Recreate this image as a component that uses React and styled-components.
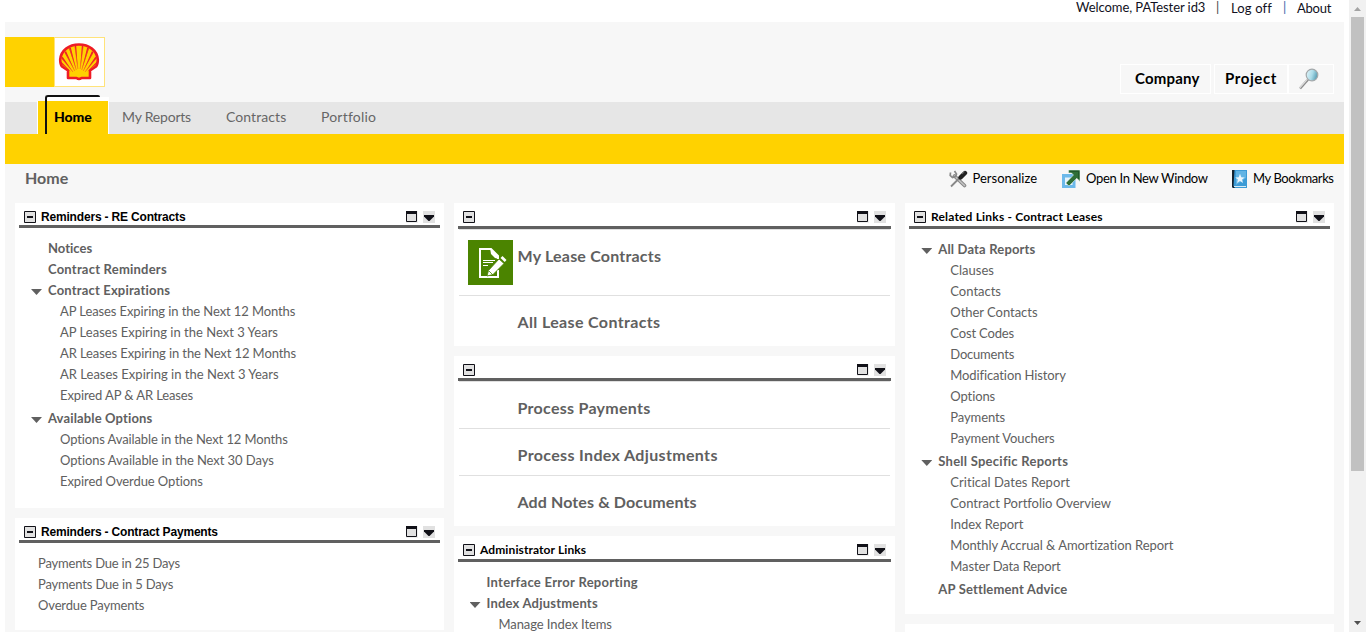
import React from "react";
import styled, { createGlobalStyle } from "styled-components";

const GlobalStyle = createGlobalStyle`
  * { box-sizing: border-box; }
  body {
    margin: 0;
    overflow: hidden;
    background: #fff;
    color: #000;
    font: 13px/21px "Trebuchet MS", Lato, "Open Sans", sans-serif;
    font-variant-ligatures: none;
  }
`;

const Window = styled.div`
  display: flex;
  height: 632px;
  overflow: hidden;
`;
const Page = styled.div`
  width: 1349px;
  padding: 0 5px;
`;

/* top line */
const UserBar = styled.div`
  display: flex;
  justify-content: flex-end;
  height: 22px;
  padding-right: 12px;
  line-height: 15px;
  white-space: nowrap;
`;
const UserItem = styled.span`
  width: ${(p) => p.$w}px;
  color: ${(p) => p.$color || "#111122"};
  letter-spacing: ${(p) => p.$ls || 0}px;
  padding-top: ${(p) => p.$top || 0}px;
`;

/* masthead */
const Masthead = styled.header`
  display: flex;
  justify-content: space-between;
  height: 80px;
  background: #f7f7f7;
`;
const Brand = styled.div`
  display: flex;
  width: 100px;
  height: 50px;
  margin-top: 15px;
  background: #ffd200;
`;
const BrandMark = styled.div`
  width: 51px;
  height: 50px;
  margin-left: 49px;
  border: 1px solid #ffe37a;
  background: #fff;
`;
const Scopes = styled.div`
  display: flex;
  height: 30px;
  margin: 42px 10px 0 0;
`;
const Scope = styled.div`
  width: ${(p) => p.$w}px;
  height: 30px;
  margin-right: ${(p) => p.$gap || 0}px;
  padding-left: ${(p) => p.$pad || 0}px;
  border: 1px solid #fff;
  font-size: 15px;
  font-weight: 700;
  line-height: 26px;
  letter-spacing: ${(p) => p.$ls || 0}px;
  svg { margin-top: 2px; }
`;

/* navigation */
const Nav = styled.nav`
  display: flex;
  height: 32px;
  padding-left: 32px;
  background: #e6e6e6;
`;
const ActiveTab = styled.div`
  position: relative;
  width: 72px;
  height: 33px;
  margin: -1px 13px 0 0;
  padding-left: 16px;
  border: solid #fff;
  border-width: 0 1px;
  background: #ffd200;
  font-size: 14px;
  font-weight: 900;
  line-height: 31px;
  letter-spacing: -0.1px;
`;
const TabTop = styled.i`
  position: absolute;
  left: 8px;
  top: -4px;
  width: 63px;
  height: 4px;
  background: #fff;
`;
const TabOutline = styled.i`
  position: absolute;
  left: 7px;
  top: -6px;
  width: 55px;
  height: 39px;
  border: solid #111;
  border-width: 2px 0 0 2px;
  border-radius: 3px 2px 0 0;
`;
const Tab = styled.div`
  width: ${(p) => p.$w}px;
  color: #666;
  font-size: 14px;
  line-height: 30px;
  letter-spacing: ${(p) => p.$ls || 0}px;
  white-space: nowrap;
`;
const SubNav = styled.div`
  height: 30px;
  background: #ffd200;
`;

/* page body */
const Body = styled.main`
  height: 468px;
  padding: 0 10px;
  background: #f7f7f7;
`;
const TitleRow = styled.div`
  display: flex;
  justify-content: space-between;
  height: 39px;
  padding-left: 10px;
`;
const Title = styled.h1`
  margin: 0;
  color: #606060;
  font-size: 16px;
  line-height: 28px;
`;
const Actions = styled.div`
  display: flex;
  height: 30px;
`;
const Action = styled.div`
  display: flex;
  align-items: center;
  width: ${(p) => p.$w}px;
  line-height: 20px;
  letter-spacing: ${(p) => p.$ls || 0}px;
  white-space: nowrap;
  svg { margin-right: ${(p) => p.$gap}px; flex: none; }
`;
const ActionLabel = styled.span`
  padding-bottom: 2px;
`;
const Columns = styled.div`
  display: grid;
  grid-template-columns: 429px 441px 429px;
  column-gap: 10px;
`;
const Column = styled.div`
  display: flex;
  flex-direction: column;
  gap: 10px;
`;
const PanelBox = styled.section`
  height: ${(p) => p.$h}px;
  padding: 0 4px;
  background: #fff;
`;
const PanelHead = styled.div`
  display: flex;
  align-items: flex-start;
  height: ${(p) => p.$h}px;
  padding: 8px 5px 0;
  border-bottom: 3px solid #606060;
`;
const PanelTitle = styled.h2`
  flex: 1;
  margin: 0 0 0 5px;
  font-family: ${(p) => (p.$arial ? '"Liberation Sans", Arial, sans-serif' : "inherit")};
  font-size: 12px;
  font-weight: 700;
  line-height: 12px;
  letter-spacing: ${(p) => p.$ls || 0}px;
  white-space: nowrap;
`;
const HeadIcon = styled.svg`
  flex: none;
  width: 12px;
  height: 12px;
  margin-left: ${(p) => p.$ml || 0}px;
`;

/* link trees */
const Tree = styled.div`
  padding: ${(p) => p.$pad};
`;
const Entry = styled.div`
  display: flex;
  align-items: center;
  height: 21px;
  margin-top: ${(p) => p.$mt || 0}px;
  padding-left: ${(p) => p.$indent || 0}px;
  color: #606060;
  font-weight: ${(p) => (p.$bold ? 700 : 400)};
  letter-spacing: ${(p) => p.$ls || 0}px;
  white-space: nowrap;
`;
const Caret = styled.i`
  width: 11px;
  height: 6px;
  margin: 3px 6px 0 -1px;
  background: #606060;
  clip-path: polygon(0 0, 100% 0, 50% 100%);
`;

/* large shortcuts */
const Shortcuts = styled.div`
  margin: 0 1px;
  border-top: 1px solid #e0e0e0;
`;
const Shortcut = styled.div`
  display: flex;
  height: ${(p) => p.$h}px;
  padding: 16px 0 0 ${(p) => (p.$icon ? 9 : 58.5)}px;
  border-bottom: ${(p) => (p.$last ? 0 : 1)}px solid #e0e0e0;
  color: #606060;
  font-size: 16px;
  font-weight: 700;
  line-height: 20px;
  letter-spacing: ${(p) => p.$ls || 0}px;
  svg { flex: none; margin: -6px 4.500px 0 0; }
`;

/* scrollbar */
const Scrollbar = styled.div`
  display: flex;
  flex-direction: column;
  align-items: center;
  width: 17px;
  background: #f1f1f1;
`;
const ScrollArrow = styled.svg`
  width: 17px;
  height: 17px;
`;
const Thumb = styled.div`
  width: 13px;
  height: 454px;
  margin-bottom: 144px;
  background: #c1c1c1;
`;

const ShellLogo = () => (
  <svg width="48" height="48" viewBox="0 0 48 48">
    <path
      d="M13 40V32.500L7 28.500C5.500 27 5.200 24 5.200 21.500C6 12.500 14 6.500 24 6.500S42 12.500 42.800 21.500C42.800 24 42.500 27 41 28.500L35 32.500V40H26.500Q24 41.800 21.500 40Z"
      fill="#ffd200" stroke="#ee1c25" strokeWidth="2.600" strokeLinejoin="round"
    />
    <g fill="#ee1c25">
      <path d="M19.700 8L22.800 31L21.200 8ZM28.300 8L25.200 31L26.800 8Z" />
      <path d="M14 10.500L21.300 32L15.800 9.500ZM34 10.500L26.700 32L32.200 9.500Z" />
      <path d="M9.500 14.500L19.800 33L11 13ZM38.500 14.500L28.200 33L37 13Z" />
      <path d="M6.500 20.500L18 34L7.500 18.500ZM41.500 20.500L30 34L40.500 18.500Z" />
      <path d="M6 25.500L16 34L6 23.500ZM42 25.500L32 34L42 23.500Z" />
    </g>
    <path d="M22.900 31L19.900 9M25.100 31L28.100 9M21.300 32L14.900 11M26.700 32L33.100 11M19.800 33L10.400 15M28.200 33L37.600 15M18 34L7 20.500M30 34L41 20.500" stroke="#f2502a" strokeWidth="0.500" fill="none" />
  </svg>
);

const Magnifier = () => (
  <svg width="24" height="24" viewBox="0 0 24 24">
    <defs>
      <linearGradient id="lens" x1="0" x2="1" y1="0" y2="0.300">
        <stop offset="0" stopColor="#e8f6fa" />
        <stop offset="0.600" stopColor="#a9dbe8" />
        <stop offset="1" stopColor="#5fa3b8" />
      </linearGradient>
    </defs>
    <path d="M11 12.500L3 21.500" stroke="#8a8a8a" strokeWidth="2.600" />
    <path d="M10.500 12L2.600 21" stroke="#dcdcdc" strokeWidth="1.200" />
    <circle cx="15" cy="8" r="5.800" fill="url(#lens)" stroke="#a3a8aa" strokeWidth="1.200" />
  </svg>
);

const ToolsIcon = () => (
  <svg width="19" height="18" viewBox="0 0 19 18">
    <path d="M5.500 6L15.500 15.500" stroke="#888" strokeWidth="3.600" strokeLinecap="round" />
    <path d="M5.500 6L15.500 15.500" stroke="#c4c4c4" strokeWidth="1.600" strokeLinecap="round" />
    <path d="M1.500 2.500L1.200 5.500L3.500 7.500L6.500 6.500L7.500 4L5.500 1" fill="none" stroke="#888" strokeWidth="1.700" />
    <path d="M2 16.500L10 8.500" stroke="#888" strokeWidth="1.800" />
    <path d="M11.500 7.500L16 3" stroke="#202020" strokeWidth="4.400" strokeLinecap="round" />
    <path d="M13 4L15.500 1.800" stroke="#666" strokeWidth="1" />
  </svg>
);

const OpenIcon = () => (
  <svg width="18" height="18" viewBox="0 0 18 18">
    <path d="M0 4H13.500V18H0Z" fill="#6cb9ea" />
    <path d="M3 7.500H10.500V15H3Z" fill="#e7f4fc" />
    <path d="M6.500 0H18V11.500L14.800 8.300L7 16L3.800 13L11.500 5L9.500 3H6.500Z" fill="#2f6f37" stroke="#f4fbff" strokeWidth="0.500" />
    <path d="M8 1.300H16.700V9" fill="none" stroke="#1f5428" strokeWidth="1" />
  </svg>
);

const BookIcon = () => (
  <svg width="15" height="18" viewBox="0 0 15 18">
    <path d="M0 0H15V18H1L0 17Z" fill="#3c9bd6" />
    <path d="M4 1H14V8L4 15Z" fill="#62b4e4" />
    <path d="M0 0H2.500L1.500 16L3 18H1L0 17Z" fill="#15232f" />
    <path d="M2 16.500H14" stroke="#d6ecf8" strokeWidth="1" />
    <path d="M8 3.800L9.300 7.200L12.800 7.400L10.100 9.600L11 13L8 11.100L5 13L5.900 9.600L3.200 7.400L6.700 7.200Z" fill="#eaf6fd" />
  </svg>
);

const LeaseIcon = () => (
  <svg width="45" height="45" viewBox="0 0 45 45">
    <path d="M0 0H45V45H0Z" fill="#4b8400" />
    <path d="M30 30V37H12V9H23L30 16V19" fill="none" stroke="#fff" strokeWidth="2" />
    <path d="M22 8L31 17V19L27 18L23 14Z" fill="#fff" />
    <path d="M15 20.500H27M15 22.500H25M15 25.500H20" stroke="#fff" strokeWidth="1" />
    <path d="M19 36L20.500 30.500L31 19L36 23.500L25 34.500Z" fill="#fff" stroke="#4b8400" strokeWidth="0.800" />
    <path d="M32.500 18L34.500 16L38.500 20L36.700 22Z" fill="#fff" />
    <path d="M21 31L24.500 34.500" stroke="#4b8400" strokeWidth="0.800" />
  </svg>
);

function Panel({ title, arial, ls, h, head = 26, children }) {
  return (
    <PanelBox $h={h}>
      <PanelHead $h={head}>
        <HeadIcon viewBox="0 0 12 12">
          <path d="M0.500 0.500H11.500V11.500H0.500Z" fill="#e1e1e1" stroke="#111118" />
          <path d="M3 5H9V7H3Z" fill="#111118" />
        </HeadIcon>
        <PanelTitle $arial={arial} $ls={ls}>{title}</PanelTitle>
        <HeadIcon viewBox="0 0 12 12">
          <path d="M0 0H12V12H0Z" fill="#efefef" />
          <path d="M0.500 0.500H10.500V10.500H0.500Z" fill="#e1e1e1" stroke="#111118" />
          <path d="M0 0H11V3H0Z" fill="#111118" />
        </HeadIcon>
        <HeadIcon viewBox="0 0 12 12" $ml={5}>
          <path d="M0 0H12V12H0Z" fill="#e1e1e1" />
          <path d="M1 4H11V5.500L6.500 10H5.500L1 5.500Z" fill="#111118" />
        </HeadIcon>
      </PanelHead>
      {children}
    </PanelBox>
  );
}

/* each item is [label, letter spacing] */
function Links({ items, indent, bold }) {
  return items.map(([label, ls]) => (
    <Entry key={label} $indent={indent} $bold={bold} $ls={ls}>{label}</Entry>
  ));
}

const expirations = [
  ["AP Leases Expiring in the Next 12 Months", -0.1],
  ["AP Leases Expiring in the Next 3 Years", 0.01],
  ["AR Leases Expiring in the Next 12 Months", -0.1],
  ["AR Leases Expiring in the Next 3 Years", 0.01],
  ["Expired AP & AR Leases", -0.11],
];
const options = [
  ["Options Available in the Next 12 Months", -0.11],
  ["Options Available in the Next 30 Days", -0.07],
  ["Expired Overdue Options", -0.09],
];
const payments = [
  ["Payments Due in 25 Days", -0.2],
  ["Payments Due in 5 Days", -0.17],
  ["Overdue Payments", -0.14],
];
const dataReports = [
  ["Clauses", 0],
  ["Contacts", 0],
  ["Other Contacts", -0.03],
  ["Cost Codes", -0.15],
  ["Documents", -0.2],
  ["Modification History", -0.11],
  ["Options", -0.1],
  ["Payments", -0.1],
  ["Payment Vouchers", -0.1],
];
const shellReports = [
  ["Critical Dates Report", 0.05],
  ["Contract Portfolio Overview", -0.02],
  ["Index Report", -0.02],
  ["Monthly Accrual & Amortization Report", -0.04],
  ["Master Data Report", -0.12],
];

export default function App() {
  return (
    <Window>
      <GlobalStyle />
      <Page>
        <UserBar>
          <UserItem $w={140} $ls={-0.07}>Welcome, PATester id3</UserItem>
          <UserItem $w={15} $color="#444">|</UserItem>
          <UserItem $w={52} $top={1} $ls={0.15}>Log off</UserItem>
          <UserItem $w={14} $color="#3a66a8">|</UserItem>
          <UserItem $w={35} $top={1} $ls={-0.25}>About</UserItem>
        </UserBar>
        <Masthead>
          <Brand><BrandMark><ShellLogo /></BrandMark></Brand>
          <Scopes>
            <Scope $w={91} $gap={3} $pad={14} $ls={0.2}>Company</Scope>
            <Scope $w={74} $pad={10} $ls={0.6}>Project</Scope>
            <Scope $w={46} $pad={8}><Magnifier /></Scope>
          </Scopes>
        </Masthead>
        <Nav>
          <ActiveTab><TabTop /><TabOutline />Home</ActiveTab>
          <Tab $w={104} $ls={-0.2}>My Reports</Tab>
          <Tab $w={95} $ls={0.08}>Contracts</Tab>
          <Tab $w={60} $ls={0.2}>Portfolio</Tab>
        </Nav>
        <SubNav />
        <Body>
          <TitleRow>
            <Title>Home</Title>
            <Actions>
              <Action $w={113} $gap={4.5}><ToolsIcon /><ActionLabel>Personalize</ActionLabel></Action>
              <Action $w={170} $gap={6} $ls={-0.31}><OpenIcon /><ActionLabel>Open In New Window</ActionLabel></Action>
              <Action $w={102} $gap={6} $ls={-0.4}><BookIcon /><ActionLabel>My Bookmarks</ActionLabel></Action>
            </Actions>
          </TitleRow>
          <Columns>
            <Column>
              <Panel title="Reminders - RE Contracts" arial ls={-0.18} h={305} head={25}>
                <Tree $pad="10px 0 0 13px">
                  <Links items={[["Notices", 0], ["Contract Reminders", 0.22]]} indent={16} bold />
                  <Entry $bold $ls={0.18}><Caret />Contract Expirations</Entry>
                  <Links indent={28} items={expirations} />
                  <Entry $bold $mt={2} $ls={0.14}><Caret />Available Options</Entry>
                  <Links indent={28} items={options} />
                </Tree>
              </Panel>
              <Panel title="Reminders - Contract Payments" arial ls={-0.18} h={112} head={25}>
                <Tree $pad="10px 0 0 19px">
                  <Links items={payments} />
                </Tree>
              </Panel>
            </Column>
            <Column>
              <Panel h={143}>
                <Shortcuts>
                  <Shortcut $h={66} $icon $ls={0.2}><LeaseIcon />My Lease Contracts</Shortcut>
                  <Shortcut $h={50} $last $ls={0.36}>All Lease Contracts</Shortcut>
                </Shortcuts>
              </Panel>
              <Panel h={170} head={25}>
                <Shortcuts>
                  <Shortcut $h={47} $ls={0.28}>Process Payments</Shortcut>
                  <Shortcut $h={47} $ls={0.35}>Process Index Adjustments</Shortcut>
                  <Shortcut $h={47} $last $ls={0.12}>Add Notes &amp; Documents</Shortcut>
                </Shortcuts>
              </Panel>
              <Panel title="Administrator Links" ls={0.1} h={120}>
                <Tree $pad="10px 0 0 12.5px">
                  <Entry $indent={16} $bold $ls={0.3}>Interface Error Reporting</Entry>
                  <Entry $bold $ls={0.2}><Caret />Index Adjustments</Entry>
                  <Entry $indent={28} $ls={-0.08}>Manage Index Items</Entry>
                </Tree>
              </Panel>
            </Column>
            <Column>
              <Panel title="Related Links - Contract Leases" ls={0.18} h={411}>
                <Tree $pad="10px 0 0 13.3px">
                  <Entry $bold $ls={0.16}><Caret />All Data Reports</Entry>
                  <Links indent={28} items={dataReports} />
                  <Entry $bold $mt={2} $ls={0.25}><Caret />Shell Specific Reports</Entry>
                  <Links indent={28} items={shellReports} />
                  <Entry $bold $indent={16} $mt={2} $ls={0.16}>AP Settlement Advice</Entry>
                </Tree>
              </Panel>
              <PanelBox $h={20} />
            </Column>
          </Columns>
        </Body>
      </Page>
      <Scrollbar>
        <ScrollArrow viewBox="0 0 17 17"><path d="M5 11L8.500 7L12 11Z" fill="#a3a3a3" /></ScrollArrow>
        <Thumb />
        <ScrollArrow viewBox="0 0 17 17"><path d="M5 6L8.500 10L12 6Z" fill="#505050" /></ScrollArrow>
      </Scrollbar>
    </Window>
  );
}
